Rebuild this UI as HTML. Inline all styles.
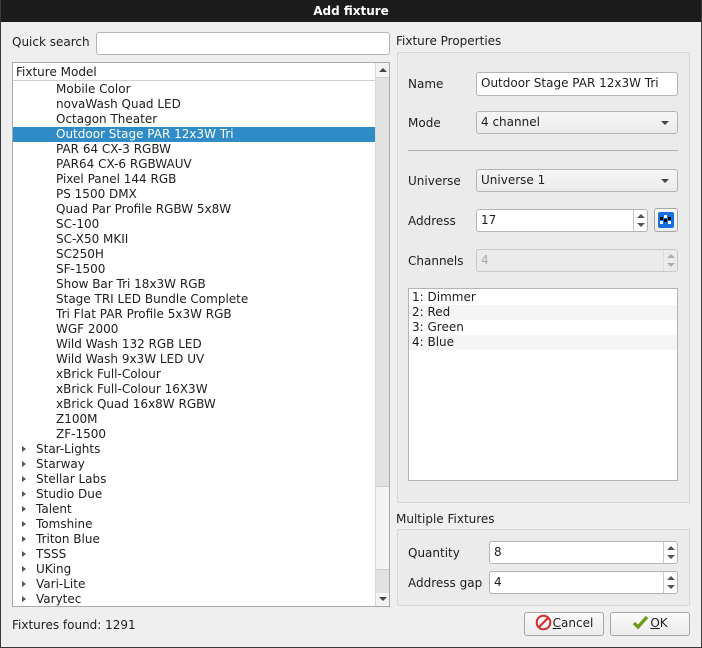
<!DOCTYPE html>
<html><head><style>
*{box-sizing:border-box;margin:0;padding:0}
body{width:702px;height:648px;background:#efefef;font-family:"DejaVu Sans","Liberation Sans",sans-serif;font-size:12px;color:#1e1e1e;position:relative;overflow:hidden}
.a{position:absolute}
.frame{left:0;top:0;width:702px;height:648px;border:1px solid #3a3a3a;border-top:none}
.title{left:0;top:0;width:702px;height:22px;background:#1c1c1c;color:#fff;font-weight:bold;text-align:center;line-height:22px;font-size:12px}
.inp{background:#fff;border:1px solid #b4b4b4;border-radius:3px;line-height:20px;padding-left:4px}
.combo{background:linear-gradient(#f6f6f6,#ebebeb);border:1px solid #b4b4b4;border-radius:3px;line-height:20px;padding-left:4px}
.combo:after{content:"";position:absolute;right:8px;top:9px;border-left:4px solid transparent;border-right:4px solid transparent;border-top:4px solid #444}
.spin{position:absolute;right:0;top:0;bottom:0;width:14px;border-left:1px solid #c8c8c8}
.spin:before{content:"";position:absolute;left:3px;top:4px;border-left:4px solid transparent;border-right:4px solid transparent;border-bottom:4px solid #555}
.spin:after{content:"";position:absolute;left:3px;bottom:4px;border-left:4px solid transparent;border-right:4px solid transparent;border-top:4px solid #555}
.row{position:absolute;left:0;height:15px;line-height:15px;white-space:nowrap}
.grp{border:1px solid #d6d6d6;border-radius:2px;background:#ebebeb}
.tri{position:absolute;left:9px;top:4px;border-top:3.5px solid transparent;border-bottom:3.5px solid transparent;border-left:4px solid #555}
.btn{background:linear-gradient(#fafafa,#ececec);border:1px solid #a8a8a8;border-radius:3px;text-align:center;line-height:21px}
</style></head><body>
<div class="a title">Add fixture</div>
<div class="a frame"></div>

<div class="a" style="left:12px;top:35px">Quick search</div>
<div class="a inp" style="left:96px;top:32px;width:294px;height:23px"></div>

<div class="a" style="left:12px;top:62px;width:378px;height:545px;border:1px solid #a8a8a8;background:#fff;overflow:hidden">
 <div class="a" style="left:0;top:0;width:362px;height:18px;border-bottom:1px solid #d0d0d0;padding-left:3px;line-height:19px;background:#fff">Fixture Model</div>
 <div class="a" style="left:0;top:19px;width:362px;height:525px">
  <div class="row" style="top:0;padding-left:43px">Mobile Color</div>
  <div class="row" style="top:15px;padding-left:43px">novaWash Quad LED</div>
  <div class="row" style="top:30px;padding-left:43px">Octagon Theater</div>
  <div class="row" style="top:45px;width:362px;padding-left:43px;background:#308cc6;color:#fff">Outdoor Stage PAR 12x3W Tri</div>
  <div class="row" style="top:60px;padding-left:43px">PAR 64 CX-3 RGBW</div>
  <div class="row" style="top:75px;padding-left:43px">PAR64 CX-6 RGBWAUV</div>
  <div class="row" style="top:90px;padding-left:43px">Pixel Panel 144 RGB</div>
  <div class="row" style="top:105px;padding-left:43px">PS 1500 DMX</div>
  <div class="row" style="top:120px;padding-left:43px">Quad Par Profile RGBW 5x8W</div>
  <div class="row" style="top:135px;padding-left:43px">SC-100</div>
  <div class="row" style="top:150px;padding-left:43px">SC-X50 MKII</div>
  <div class="row" style="top:165px;padding-left:43px">SC250H</div>
  <div class="row" style="top:180px;padding-left:43px">SF-1500</div>
  <div class="row" style="top:195px;padding-left:43px">Show Bar Tri 18x3W RGB</div>
  <div class="row" style="top:210px;padding-left:43px">Stage TRI LED Bundle Complete</div>
  <div class="row" style="top:225px;padding-left:43px">Tri Flat PAR Profile 5x3W RGB</div>
  <div class="row" style="top:240px;padding-left:43px">WGF 2000</div>
  <div class="row" style="top:255px;padding-left:43px">Wild Wash 132 RGB LED</div>
  <div class="row" style="top:270px;padding-left:43px">Wild Wash 9x3W LED UV</div>
  <div class="row" style="top:285px;padding-left:43px">xBrick Full-Colour</div>
  <div class="row" style="top:300px;padding-left:43px">xBrick Full-Colour 16X3W</div>
  <div class="row" style="top:315px;padding-left:43px">xBrick Quad 16x8W RGBW</div>
  <div class="row" style="top:330px;padding-left:43px">Z100M</div>
  <div class="row" style="top:345px;padding-left:43px">ZF-1500</div>
  <div class="row" style="top:360px;width:200px;padding-left:23px"><i class="tri"></i>Star-Lights</div>
  <div class="row" style="top:375px;width:200px;padding-left:23px"><i class="tri"></i>Starway</div>
  <div class="row" style="top:390px;width:200px;padding-left:23px"><i class="tri"></i>Stellar Labs</div>
  <div class="row" style="top:405px;width:200px;padding-left:23px"><i class="tri"></i>Studio Due</div>
  <div class="row" style="top:420px;width:200px;padding-left:23px"><i class="tri"></i>Talent</div>
  <div class="row" style="top:435px;width:200px;padding-left:23px"><i class="tri"></i>Tomshine</div>
  <div class="row" style="top:450px;width:200px;padding-left:23px"><i class="tri"></i>Triton Blue</div>
  <div class="row" style="top:465px;width:200px;padding-left:23px"><i class="tri"></i>TSSS</div>
  <div class="row" style="top:480px;width:200px;padding-left:23px"><i class="tri"></i>UKing</div>
  <div class="row" style="top:495px;width:200px;padding-left:23px"><i class="tri"></i>Vari-Lite</div>
  <div class="row" style="top:510px;width:200px;padding-left:23px"><i class="tri"></i>Varytec</div>
 </div>
 <div class="a" style="left:362px;top:0;width:14px;height:543px;background:#f4f4f4;border-left:1px solid #d8d8d8">
  <div class="a" style="left:3px;top:5px;border-left:4px solid transparent;border-right:4px solid transparent;border-bottom:4px solid #444"></div>
  <div class="a" style="left:0;top:14px;width:13px;height:410px;background:#e2e2e2;border-top:1px solid #d0d0d0;border-bottom:1px solid #d0d0d0"></div>
  <div class="a" style="left:0;top:506px;width:13px;height:24px;background:#e2e2e2;border-top:1px solid #d0d0d0"></div>
  <div class="a" style="left:3px;top:534px;border-left:4px solid transparent;border-right:4px solid transparent;border-top:4px solid #444"></div>
 </div>
</div>
<div class="a" style="left:12px;top:618px">Fixtures found: 1291</div>

<div class="a" style="left:396px;top:34px">Fixture Properties</div>
<div class="a grp" style="left:397px;top:52px;width:293px;height:451px"></div>
<div class="a" style="left:408px;top:77px">Name</div>
<div class="a inp" style="left:476px;top:72px;width:202px;height:24px">Outdoor Stage PAR 12x3W Tri</div>
<div class="a" style="left:408px;top:116px">Mode</div>
<div class="a combo" style="left:476px;top:111px;width:202px;height:23px;line-height:21px">4 channel</div>
<div class="a" style="left:408px;top:150px;width:270px;height:1px;background:#b0b0b0"></div>
<div class="a" style="left:408px;top:174px">Universe</div>
<div class="a combo" style="left:476px;top:169px;width:202px;height:23px;line-height:21px">Universe 1</div>
<div class="a" style="left:408px;top:214px">Address</div>
<div class="a inp" style="left:476px;top:209px;width:172px;height:23px">17<span class="spin"></span></div>
<div class="a btn" style="left:654px;top:208px;width:24px;height:24px">
 <svg width="18" height="18" style="margin-top:2px" viewBox="0 0 18 18"><rect x="1" y="1" width="16" height="16" rx="2" fill="#1a6fe0"/><rect x="3" y="6" width="3" height="3" fill="#000"/><rect x="7" y="8" width="3" height="3" fill="#000"/><rect x="11" y="6" width="3" height="3" fill="#000"/><rect x="3" y="10" width="3" height="3" fill="#fff"/><rect x="11" y="10" width="3" height="3" fill="#fff"/><rect x="7" y="4" width="3" height="3" fill="#fff"/></svg>
</div>
<div class="a" style="left:408px;top:254px">Channels</div>
<div class="a inp" style="left:476px;top:249px;width:202px;height:23px;background:#ebebeb;color:#aaa;border-color:#c8c8c8">4<span class="spin" style="opacity:.4"></span></div>
<div class="a" style="left:408px;top:288px;width:270px;height:193px;background:#fff;border:1px solid #b4b4b4">
 <div class="row" style="top:1px;width:268px;padding-left:3px">1: Dimmer</div>
 <div class="row" style="top:16px;width:268px;padding-left:3px;background:#f5f5f5">2: Red</div>
 <div class="row" style="top:31px;width:268px;padding-left:3px">3: Green</div>
 <div class="row" style="top:46px;width:268px;padding-left:3px;background:#f5f5f5">4: Blue</div>
</div>

<div class="a" style="left:396px;top:512px">Multiple Fixtures</div>
<div class="a grp" style="left:397px;top:529px;width:293px;height:77px"></div>
<div class="a" style="left:408px;top:546px">Quantity</div>
<div class="a inp" style="left:489px;top:541px;width:189px;height:23px">8<span class="spin"></span></div>
<div class="a" style="left:408px;top:576px">Address gap</div>
<div class="a inp" style="left:489px;top:571px;width:189px;height:23px">4<span class="spin"></span></div>

<div class="a btn" style="left:524px;top:612px;width:80px;height:24px"><svg width="17" height="17" viewBox="0 0 17 17" style="vertical-align:-4px;margin-right:1px"><circle cx="8.5" cy="8.5" r="6.8" fill="none" stroke="#d42a2a" stroke-width="2"/><path d="M4 13L13 4" stroke="#d42a2a" stroke-width="2"/></svg><u>C</u>ancel</div>
<div class="a btn" style="left:610px;top:612px;width:80px;height:24px"><svg width="17" height="15" viewBox="0 0 17 15" style="vertical-align:-3px;margin-right:1px"><path d="M2 8L6 12L15 2" fill="none" stroke="#6a9a10" stroke-width="3.2"/></svg><u>O</u>K</div>
</body></html>
